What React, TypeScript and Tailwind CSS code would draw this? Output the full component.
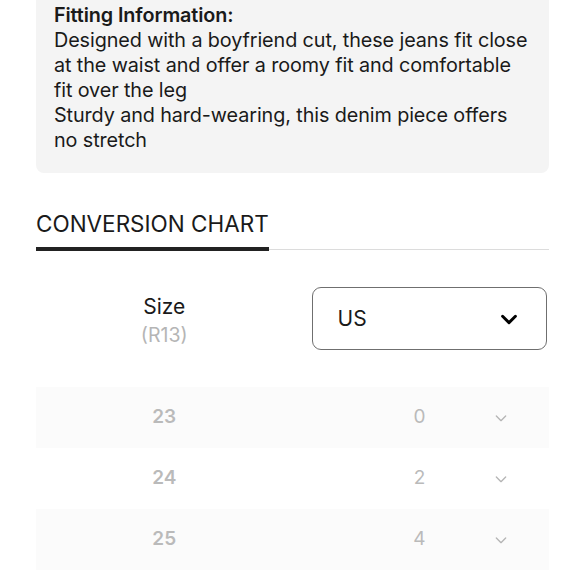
import React from 'react';

const rows = [
  { size: '23', us: '0', shade: true },
  { size: '24', us: '2', shade: false },
  { size: '25', us: '4', shade: true },
];

const Chevron = ({ className }: { className?: string }) => (
  <svg viewBox="0 0 24 24" fill="none" stroke="currentColor" strokeLinecap="round" strokeLinejoin="round" className={className}>
    <path d="M5 9l7 7 7-7" />
  </svg>
);

export default function App() {
  return (
    <div className="w-[580px] h-[580px] overflow-hidden bg-white text-[#1a1a1a] font-['Inter',sans-serif]">
      <div className="pl-[36px] pr-[31px] -mt-[10px]">
        {/* Fitting info card */}
        <div className="bg-[#f4f4f4] rounded-[8px] pt-[13px] pb-[20px] pl-[18px] pr-[18px] text-[19.8px] leading-[25px] tracking-[-0.1px]">
          <p className="font-semibold">Fitting Information:</p>
          <p>Designed with a boyfriend cut, these jeans fit close at the waist and offer a roomy fit and comfortable fit over the leg</p>
          <p>Sturdy and hard-wearing, this denim piece offers no stretch</p>
        </div>

        {/* Tabs */}
        <div className="mt-[36px] flex items-end">
          <div className="border-b-[4px] border-[#222] pb-[8px] text-[22.5px] leading-[30px]">CONVERSION CHART</div>
          <div className="flex-1 border-b-[1px] border-[#dcdcdc] mb-[1px]" />
        </div>

        {/* Header row */}
        <div className="mt-[36px] grid grid-cols-2 items-center">
          <div className="flex flex-col items-center pt-[4px]">
            <span className="text-[21px] leading-[28px]">Size</span>
            <span className="text-[19.5px] leading-[28px] text-[#b5b5b5]">(R13)</span>
          </div>
          <div className="pl-[19px] pr-[2px]">
            <div className="h-[63px] rounded-[9px] border border-[#6f6f6f] flex items-center justify-between pl-[25px] pr-[26px]">
              <span className="text-[21px]">US</span>
              <Chevron className="w-[22px] h-[22px] stroke-[3.2] text-black" />
            </div>
          </div>
        </div>

        {/* Size rows */}
        <div className="mt-[37px]">
          {rows.map((r) => (
            <div key={r.size} className={`grid grid-cols-2 h-[61px] items-center ${r.shade ? 'bg-[#fbfbfb]' : 'bg-white'}`}>
              <div className="text-center text-[19px] font-semibold text-[#bababa]">{r.size}</div>
              <div className="flex items-center">
                <span className="ml-[97px] w-[60px] text-center text-[19px] text-[#bababa]">{r.us}</span>
                <Chevron className="ml-[43px] w-[16px] h-[16px] stroke-[2] text-[#b5b5b5]" />
              </div>
            </div>
          ))}
        </div>
      </div>
    </div>
  );
}
